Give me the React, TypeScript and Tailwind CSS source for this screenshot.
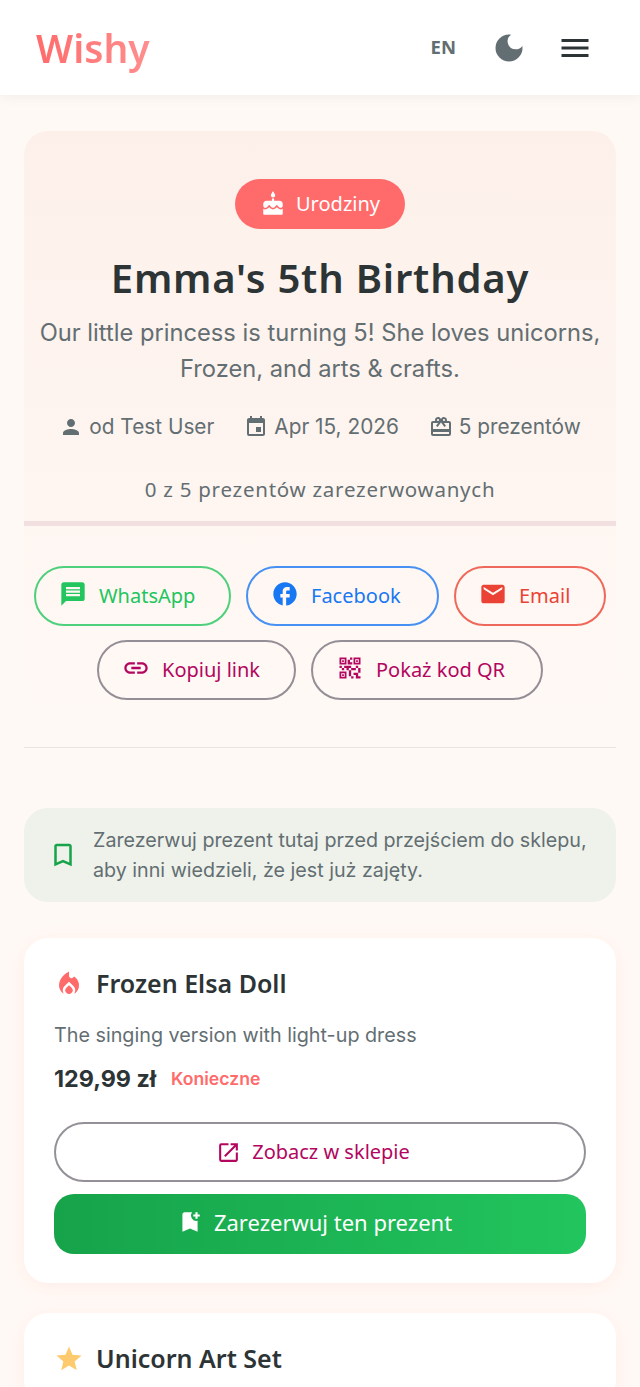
import { MdCake, MdCardGiftcard, MdEmail, MdEvent, MdFacebook, MdLink, MdLocalFireDepartment, MdMenu, MdMessage, MdOpenInNew, MdPerson, MdQrCode2, MdStar, MdBookmarkBorder, MdBookmarkAdd, MdDarkMode } from "react-icons/md";
import type { ReactNode } from "react";

const heading = "font-['Noto_Sans',sans-serif]";

function Meta({ icon, text }: { icon: ReactNode; text: string }) {
  return (
    <span className="flex items-center gap-[6px] text-[#636e72] text-[20.8px] leading-[30px]">
      {icon}
      {text}
    </span>
  );
}

function ShareButton({ icon, label, className }: { icon: ReactNode; label: string; className: string }) {
  return (
    <button className={`h-[60px] rounded-[30px] border-2 pl-[23px] flex items-center gap-[12px] text-[20px] ${heading} ${className}`}>
      <span className="-mt-[5px]">{icon}</span>
      {label}
    </button>
  );
}

export default function App() {
  return (
    <div className="h-[1387px] overflow-hidden bg-[#fff9f5] font-['Inter',sans-serif]">
      {/* Header */}
      <header className="h-[95px] bg-white shadow-[0_2px_12px_rgba(0,0,0,0.05)] flex items-center pl-[36px] pr-[47px] relative">
        <span className={`text-[39px] leading-[60px] font-semibold bg-gradient-to-r from-[#ff6b6b] to-[#ff8e8e] bg-clip-text text-transparent ${heading}`}>Wishy</span>
        <span className="ml-auto -mt-[2px] text-[18.5px] font-bold text-[#636e72] font-['Open_Sans',sans-serif]">EN</span>
        <MdDarkMode className="ml-[35px] text-[#636e72]" size={36} />
        <MdMenu className="ml-[30px] text-[#2d3436]" size={36} />
      </header>

      <main className="px-6 pt-9">
        {/* Hero + share */}
        <div className="rounded-[24px] bg-gradient-to-b from-[#fdf0ea] to-[#fff9f5] pb-4">
          <section className="pt-12 flex flex-col items-center">
            <span className={`h-[50px] w-[170px] rounded-[25px] bg-[#ff6b6b] text-white flex items-center justify-center gap-2.5 text-[20px] ${heading}`}>
              <MdCake size={26} />
              Urodziny
            </span>
            <h1 className={`mt-[24px] text-[40px] leading-[50px] font-semibold tracking-[0.8px] text-[#2d3436] ${heading}`}>Emma's 5th Birthday</h1>
            <p className="mt-[12px] w-[580px] text-center text-[23.7px] leading-[36px] text-[#636e72]">
              Our little princess is turning 5! She loves unicorns, Frozen, and arts &amp; crafts.
            </p>
            <div className="mt-[25px] flex gap-[30px]">
              <Meta icon={<MdPerson size={24} />} text="od Test User" />
              <Meta icon={<MdEvent size={24} />} text="Apr 15, 2026" />
              <Meta icon={<MdCardGiftcard size={24} />} text="5 prezentów" />
            </div>
            <p className={`mt-[32px] text-[20.5px] leading-[30px] tracking-[0.75px] text-[#636e72] ${heading}`}>0 z 5 prezentów zarezerwowanych</p>
            <div className="mt-[17px] h-[5px] w-full bg-[#f2e0e0]" />
          </section>

          {/* Share */}
          <section className="pt-[40px] flex flex-col items-center gap-[14px]">
            <div className="flex gap-[15px]">
              <ShareButton className="w-[197px] border-[#22c55e]/80 text-[#22c55e]" icon={<MdMessage size={28} />} label="WhatsApp" />
              <ShareButton className="w-[193px] border-[#1877f2]/80 text-[#1877f2]" icon={<MdFacebook size={28} />} label="Facebook" />
              <ShareButton className="w-[152px] border-[#ea4335]/80 text-[#ea4335]" icon={<MdEmail size={28} />} label="Email" />
            </div>
            <div className="flex gap-[15px]">
              <ShareButton className="w-[199px] border-[#79747e]/80 text-[#b3065f]" icon={<MdLink size={28} />} label="Kopiuj link" />
              <ShareButton className="w-[232px] border-[#79747e]/80 text-[#b3065f]" icon={<MdQrCode2 size={28} />} label="Pokaż kod QR" />
            </div>
          </section>
        </div>
        <div className="mt-[31px] border-b border-[#e8e4e2]" />

        {/* Notice */}
        <div className="mt-[60px] h-[94px] rounded-[24px] bg-[#eef2ea] flex items-center pl-[24px] pr-[24px] gap-[15px]">
          <MdBookmarkBorder className="text-[#16a34a] shrink-0" size={30} />
          <p className="text-[19.7px] leading-[30px] text-[#636e72]">
            Zarezerwuj prezent tutaj przed przejściem do sklepu, aby inni wiedzieli, że jest już zajęty.
          </p>
        </div>

        {/* Gift card */}
        <article className="mt-9 rounded-[24px] bg-white shadow-[0_4px_20px_rgba(255,107,107,0.08)] pt-[30px] px-[30px] pb-[29px]">
          <div className="flex items-center gap-3">
            <MdLocalFireDepartment className="text-[#ff6b6b]" size={30} />
            <h2 className={`-mt-px text-[25px] leading-[32px] font-semibold text-[#2d3436] ${heading}`}>Frozen Elsa Doll</h2>
          </div>
          <p className="mt-[21px] text-[19.75px] leading-[30px] text-[#636e72]">The singing version with light-up dress</p>
          <div className="mt-[11px] flex items-center gap-[15px]">
            <span className="text-[23.3px] leading-[36px] font-bold text-[#2d3436]">129,99 zł</span>
            <span className="text-[17.6px] font-semibold text-[#ff6b6b]">Konieczne</span>
          </div>
          <button className={`mt-[25px] w-full h-[60px] rounded-[30px] border-2 border-[#79747e]/80 text-[#b3065f] pr-[14px] flex items-center justify-center gap-[11px] text-[20px] ${heading}`}>
            <MdOpenInNew size={25} />
            Zobacz w sklepie
          </button>
          <button className={`mt-3 w-full h-[60px] rounded-[20px] bg-gradient-to-r from-[#16a34a] to-[#22c55e] text-white pr-[11px] pb-[4px] flex items-center justify-center gap-[11px] text-[22px] ${heading}`}>
            <MdBookmarkAdd size={26} />
            Zarezerwuj ten prezent
          </button>
        </article>

        <article className="mt-[30px] rounded-[24px] bg-white shadow-[0_4px_20px_rgba(255,107,107,0.08)] p-[30px]">
          <div className="flex items-center gap-3">
            <MdStar className="text-[#fdcb6e]" size={30} />
            <h2 className={`-mt-px text-[25px] leading-[32px] font-semibold text-[#2d3436] ${heading}`}>Unicorn Art Set</h2>
          </div>
        </article>
      </main>
    </div>
  );
}
